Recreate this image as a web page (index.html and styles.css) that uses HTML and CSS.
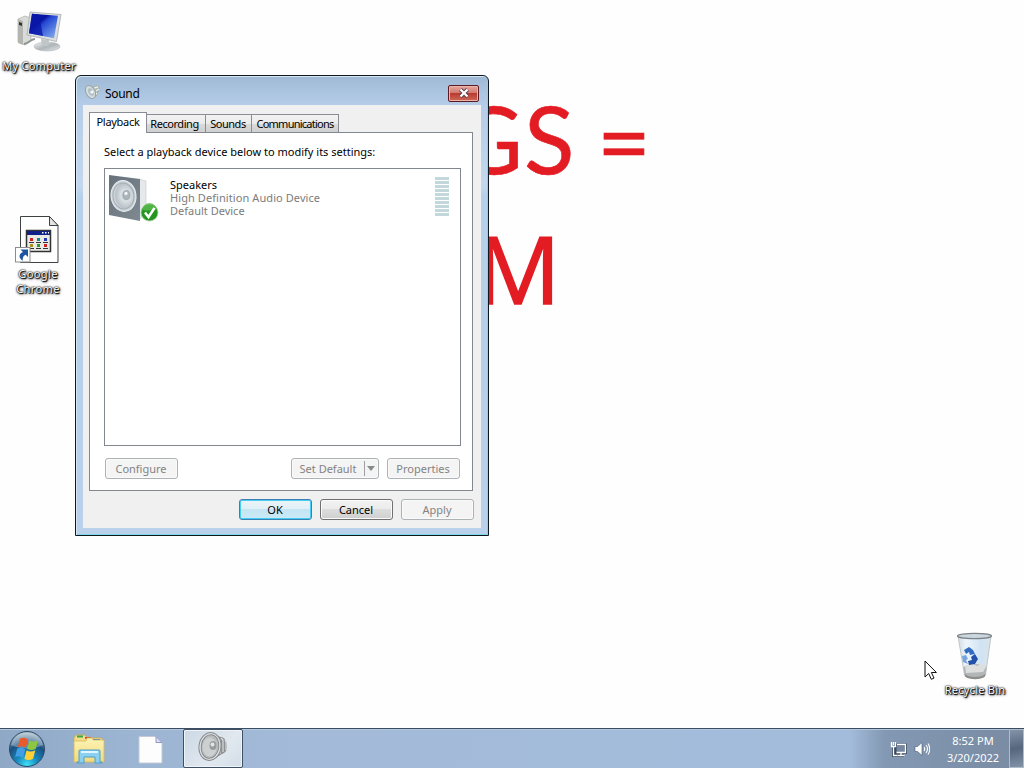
FILE: index.html
```html
<!DOCTYPE html>
<html lang="en">
<head>
    <meta charset="UTF-8">
    <meta name="viewport" content="width=device-width, initial-scale=1.0">
    <title>Sound</title>
    <link rel="stylesheet" href="styles.css">
</head>
<body>
    <!-- Shared gradients and shapes -->
    <svg class="defs" width="0" height="0">
        <defs>
            <linearGradient id="metal" x1="0" y1="0" x2="1" y2="1">
                <stop offset="0" stop-color="#fafafa"/>
                <stop offset="0.5" stop-color="#aeb4b8"/>
                <stop offset="1" stop-color="#e6e9ea"/>
            </linearGradient>
            <linearGradient id="screen" x1="0" y1="0" x2="1" y2="1">
                <stop offset="0" stop-color="#0a1fb0"/>
                <stop offset="0.35" stop-color="#0713a0"/>
                <stop offset="0.45" stop-color="#2448d4"/>
                <stop offset="1" stop-color="#8fb8f0"/>
            </linearGradient>
            <linearGradient id="cabinet" x1="0" y1="0" x2="1" y2="1">
                <stop offset="0" stop-color="#66717b"/>
                <stop offset="1" stop-color="#7f8991"/>
            </linearGradient>
            <radialGradient id="cone" cx="0.6" cy="0.5" r="0.6">
                <stop offset="0" stop-color="#9da7ae"/>
                <stop offset="0.35" stop-color="#dbe1e5"/>
                <stop offset="0.8" stop-color="#b9c2c8"/>
                <stop offset="1" stop-color="#e9edef"/>
            </radialGradient>
            <radialGradient id="orb" cx="0.5" cy="0.95" r="0.9">
                <stop offset="0" stop-color="#3fe0f6"/>
                <stop offset="0.35" stop-color="#1688bd"/>
                <stop offset="0.7" stop-color="#1b5080"/>
                <stop offset="1" stop-color="#9db6c4"/>
            </radialGradient>
            <linearGradient id="folder" x1="0" y1="0" x2="0" y2="1">
                <stop offset="0" stop-color="#fdf4b6"/>
                <stop offset="1" stop-color="#f2da7c"/>
            </linearGradient>
            <linearGradient id="glass" x1="0" y1="0" x2="1" y2="0">
                <stop offset="0" stop-color="#d3dde5"/>
                <stop offset="0.25" stop-color="#eef6fc"/>
                <stop offset="0.7" stop-color="#cfe3f3"/>
                <stop offset="1" stop-color="#dbe4ea"/>
            </linearGradient>
        </defs>
    </svg>

    <div class="desktop">
        <svg class="wallpaper" width="1024" height="728" viewBox="0 0 1024 728">
            <text y="174 174 175" x="455 524 597">GS=</text>
            <text class="wide" y="304" x="476">M</text>
        </svg>

        <div class="shortcut computer">
            <svg width="48" height="42" viewBox="0 0 48 42">
                <path d="M3 8l7-3 6 2v23l-6 4-7-3z" fill="#d9dbd9" stroke="#a9adab" stroke-width=".7"/>
                <path d="M3 8l5 2v24l-5-2z" fill="#b3b5b0"/>
                <path d="M4 11l3 1v3l-3-1z" fill="#34362e"/>
                <path d="M9 33c5-1 7-5 11-5" fill="none" stroke="#8f9594" stroke-width="2"/>
                <ellipse cx="32" cy="35.500" rx="13" ry="4.500" fill="url(#metal)" stroke="#b5b9ba" stroke-width=".6"/>
                <path d="M26 28l8 1-1 6h-6z" fill="#c0c5c7"/>
                <path d="M15 1l31 2.500-4.500 27L12 24z" fill="#dcdfe0" stroke="#a7abae" stroke-width=".8"/>
                <path d="M17 2.800l26 2-4 22.500-25-5z" fill="url(#screen)"/>
                <path d="M17 2.800l7 .6 4 21.500-14-2.700z" fill="#0a17a8" opacity=".8"/>
            </svg>
            <span>My Computer</span>
        </div>

        <div class="shortcut chrome">
            <svg width="46" height="50" viewBox="0 0 46 50">
                <path d="M5.500 1.500h29l8.500 9v37H5.500z" fill="#fefefe" stroke="#3f4242"/>
                <path d="M34.500 1.500v9H43z" fill="#e3e3e3" stroke="#3f4242"/>
                <rect x="11.500" y="15.500" width="24" height="21" fill="#e9e9e6" stroke="#333" stroke-width="1.500"/>
                <rect x="12" y="16" width="23" height="4" fill="#10218a"/>
                <path d="M27 17h1.500v1.500H27zM30 17h1.500v1.500H30zM33 17h1v1.500h-1z" fill="#fff"/>
                <path d="M15 23h3v3h-3zM29 29h3v3h-3z" fill="#d22323"/>
                <path d="M22 23h3v3h-3z" fill="#168b83"/>
                <path d="M29 23h3v3h-3z" fill="#2737b5"/>
                <path d="M15 29h3v3h-3z" fill="#a3921c"/>
                <path d="M22 29h3v3h-3z" fill="#2c9a2a"/>
                <path d="M14 27.500h5M21 27.500h5M28 27.500h5M14 33.500h5M21 33.500h5M28 33.500h5" stroke="#333"/>
                <rect x=".5" y="32.500" width="14.500" height="14.500" fill="#fff" stroke="#8c8c8c"/>
                <path d="M5.500 34.500h7.500v7.500l-2.300-2.300c-2.400 1-3.200 3-2.900 6-4.500-3-4.300-6.500.2-8.600z" fill="#1d56a0"/>
            </svg>
            <span>Google<br>Chrome</span>
        </div>

        <div class="shortcut recycle">
            <svg width="40" height="48" viewBox="0 0 40 48">
                <path d="M3 4h33l-5.500 39c-3 4-18 4-21 0z" fill="url(#glass)" stroke="#b4bbbf" stroke-width=".8"/>
                <path d="M8.500 35c5-4 17-4 23 0l-1 8c-4 4-18 4-21 0z" fill="#b3b6b7"/>
                <path d="M10 34l6-3 6 3 5-3 4 4-3 5-17 1z" fill="#dddfdf"/>
                <path d="M9.500 42c5 4 16 4 21 0l-.5 2.500c-4 3.500-16 3.500-20 0z" fill="#8c8c8b"/>
                <ellipse cx="19.500" cy="4" rx="17" ry="2.600" fill="#cbd7df" stroke="#7d8387" stroke-width="1.300"/>
                <path d="M9 18l5-3 4 3 2 4-5 1-1-3-3 2z" fill="#326cc3"/>
                <path d="M20 22l3 5-3 5-6 1-1-4 4-1-1-3z" fill="#2350a8"/>
                <path d="M7 24l4-1 2 4-2 1 2 4-5-2z" fill="#79a5df"/>
            </svg>
            <span>Recycle Bin</span>
        </div>

        <div class="window">
            <div class="title-bar">
                <svg width="16" height="16" viewBox="0 0 16 16">
                    <path d="M8 3l5-2 3 3-3 8-6 3z" fill="#a9b3ae"/>
                    <path d="M10 4l4-1M10 12l3-3M12 7l3-2" stroke="#e9efe6" stroke-width="1.500"/>
                    <ellipse cx="6.500" cy="8" rx="4.500" ry="7" fill="#d5dddb" stroke="#93a2aa" transform="rotate(-28 6.500 8)"/>
                    <ellipse cx="7" cy="8" rx="2.500" ry="4.300" fill="#b3c1c6" transform="rotate(-28 7 8)"/>
                    <circle cx="8" cy="8" r="1.600" fill="#f8faf9"/>
                </svg>
                <span class="title">Sound</span>
                <button class="close" aria-label="Close">
                    <svg width="12" height="10" viewBox="0 0 12 10">
                        <path d="M2.500 1.500l7 7M9.500 1.500l-7 7" stroke="#5b3a48" stroke-width="4"/>
                        <path d="M2.500 1.500l7 7M9.500 1.500l-7 7" stroke="#fff" stroke-width="2.300"/>
                    </svg>
                </button>
            </div>
            <div class="client">
                <div class="tabs">
                    <div class="tab active">Playback</div>
                    <div class="tab recording">Recording</div>
                    <div class="tab sounds">Sounds</div>
                    <div class="tab communications">Communications</div>
                </div>
                <div class="panel">
                    <div class="hint">Select a playback device below to modify its settings:</div>
                    <div class="device-list">
                        <div class="device">
                            <svg width="54" height="50" viewBox="0 0 54 50">
                                <path d="M31 5l7 2v32l-7 7z" fill="#e5e9eb" stroke="#c4cbd0" stroke-width=".6"/>
                                <path d="M1 1l31 4v42L1 41z" fill="url(#cabinet)"/>
                                <ellipse cx="15.500" cy="22" rx="12.500" ry="15.500" fill="#cdd4d9" stroke="#e7edf0" stroke-width="1" transform="rotate(-6 15 22)"/>
                                <ellipse cx="15.500" cy="22" rx="10.500" ry="13" fill="url(#cone)" stroke="#a3adb4" transform="rotate(-6 15 22)"/>
                                <ellipse cx="18.500" cy="21" rx="3.500" ry="4.500" fill="#aab4bb" stroke="#8f9aa1" stroke-width=".6"/>
                                <circle cx="18" cy="19.500" r="1.700" fill="#eff3f5"/>
                                <circle cx="41.500" cy="38.500" r="8.500" fill="#23961f" stroke="#a9cfa0" stroke-width=".8"/>
                                <path d="M34.500 36a7 7 0 0 1 14 0c-5-1-8 2-14 0z" fill="#63bf57" opacity=".7"/>
                                <path d="M37 38.500l3.500 4.500 6-9" fill="none" stroke="#fff" stroke-width="2.500"/>
                            </svg>
                            <div class="device-text">
                                <div class="name">Speakers</div>
                                <div class="model">High Definition Audio Device</div>
                                <div>Default Device</div>
                            </div>
                            <div class="meter"></div>
                        </div>
                    </div>
                    <div class="panel-buttons">
                        <button class="btn" disabled>Configure</button>
                        <button class="btn split" disabled><span>Set Default</span><i></i></button>
                        <button class="btn" disabled>Properties</button>
                    </div>
                </div>
                <div class="dialog-buttons">
                    <button class="btn default">OK</button>
                    <button class="btn">Cancel</button>
                    <button class="btn" disabled>Apply</button>
                </div>
            </div>
        </div>
    </div>

    <div class="taskbar">
        <svg class="start" width="38" height="38" viewBox="0 0 38 38">
            <circle cx="19" cy="19" r="17.500" fill="url(#orb)" stroke="#2b4a66"/>
            <path d="M3 15a16.500 16.500 0 0 1 32 0c-8 4-22 5-32 0z" fill="#fff" opacity=".3"/>
            <path d="M12 8.500c3-1.300 5.500-1 8 .8l-2.200 8.500c-2.500-1.700-5-2-8-.8z" fill="#ea5a2b"/>
            <path d="M21.300 10.200c2.600 1.600 5.500 1.600 8.700 0l-2.200 8.500c-3 1.600-6 1.600-8.700 0z" fill="#8fc63f"/>
            <path d="M9.300 18.500c3-1.300 5.500-1 8 .8l-2.200 8.500c-2.500-1.700-5-2-8-.8z" fill="#3f9fe4"/>
            <path d="M18.600 20.200c2.600 1.600 5.500 1.600 8.700 0l-2.200 8.500c-3 1.600-6 1.600-8.700 0z" fill="#fdd037"/>
        </svg>
        <svg class="explorer" width="34" height="32" viewBox="0 0 34 32">
            <path d="M2 4l2-3h9l2 3h15v22H2z" fill="#f3dd86" stroke="#c9a94c" stroke-width=".8"/>
            <path d="M5 1.500h6v2H5z" fill="#35a64a"/>
            <path d="M13 3h6v2h-6z" fill="#d9512c"/>
            <path d="M21 5h7v2h-7z" fill="#3a86d0"/>
            <path d="M15 4h5l1 2h11v22H2V7h12z" fill="url(#folder)" stroke="#d7b95b" stroke-width=".8"/>
            <path d="M7 17q0-1 1-1h19q1 0 1 1v11h2v1h-7v-6H12v6H5v-1h2z" fill="#8bd0ef" stroke="#4b9fd0"/>
            <path d="M9 18h17" stroke="#e1f6ff" stroke-width="2"/>
        </svg>
        <svg class="document" width="25" height="28" viewBox="0 0 25 28">
            <path d="M1 .5h17l6 6V27H1z" fill="#fdfdfe" stroke="#c3cad6"/>
            <path d="M18 .5v6h6z" fill="#dcdff2" stroke="#8f95c5"/>
        </svg>
        <div class="task">
            <svg width="32" height="32" viewBox="0 0 32 32">
                <path d="M14 3l10 3c3 0 6 4 6 9s-2 7-5 8l-10 6z" fill="#8d9193"/>
                <path d="M20 6l3 3v14M24 7l2 2v12M28 9l1 2v8" fill="none" stroke="#d9dcdd" stroke-width="1.200"/>
                <ellipse cx="13" cy="15.500" rx="11" ry="14" fill="#e0e3e4" stroke="#85898b" transform="rotate(8 13 15.500)"/>
                <ellipse cx="13" cy="15.500" rx="8.800" ry="11.800" fill="#b9bdbe" stroke="#85898b" transform="rotate(8 13 15.500)"/>
                <ellipse cx="12.500" cy="16" rx="7" ry="9.500" fill="#cdd0d1"/>
                <ellipse cx="16" cy="14.500" rx="3.500" ry="4.500" fill="#979c9e"/>
                <circle cx="15.500" cy="13.500" r="2" fill="#e2e4e5"/>
            </svg>
        </div>
        <div class="tray">
            <svg class="network" width="17" height="17" viewBox="0 0 17 17">
                <path d="M6 4h9.500v7.500H6zM8 14.500h6M11 11.500v3M3.500 6v8.500h4" fill="none" stroke="#38485d" stroke-width="3"/>
                <path d="M6.500 4.500h9v7h-9z" fill="#76889f"/>
                <path d="M7 3.500h8.500v8h-9M7.500 14.500h7M11 12v2M3.500 6v8.500H7M1.500 1v4.500h4V1M3.500 1v3" fill="none" stroke="#fff" stroke-width="1.300"/>
            </svg>
            <svg class="volume" width="16" height="16" viewBox="0 0 16 16">
                <path d="M1 5.500h2.500L8 1.500v13l-4.500-4H1z" fill="#fff" stroke="#4b5b70" stroke-width=".6"/>
                <path d="M10 6q1.500 2 0 4M12 4q3 4 0 8M14 2.500q3.500 5.500 0 11" fill="none" stroke="#fff" stroke-width="1.100"/>
            </svg>
            <div class="clock">
                <div>8:52 PM</div>
                <div>3/20/2022</div>
            </div>
            <div class="show-desktop"></div>
        </div>
    </div>

    <svg class="cursor" width="14" height="21" viewBox="0 0 14 21">
        <path d="M1 1v16l3.700-3.500 2.600 5.800 2.700-1.200-2.600-5.600h5z" fill="#fff" stroke="#111"/>
    </svg>
</body>
</html>
```
FILE: styles.css
```css
body {
    margin: 0;
    width: 1024px;
    height: 768px;
    overflow: hidden;
    display: flex;
    flex-direction: column;
    background-color: #fefefe;
    font-family: "Noto Sans", "Open Sans", sans-serif;
    font-size: 11px;
    color: #000;
}

svg {
    display: block;
    flex: none;
}

.defs {
    position: absolute;
}

.desktop {
    position: relative;
    flex: 1;
}

.wallpaper text {
    font-family: Lato, sans-serif;
    font-size: 93px;
    fill: #e31c24;
    stroke: #e31c24;
    stroke-width: 0.6px;
}

.wallpaper .wide {
    font-family: "Open Sans", sans-serif;
    font-size: 94px;
    stroke-width: 1.5px;
}

/* Desktop icons */
.shortcut {
    position: absolute;
    display: flex;
    flex-direction: column;
    align-items: center;
    width: 80px;
    line-height: 15px;
    text-align: center;
    color: #fff;
    white-space: nowrap;
    letter-spacing: 0.25px;
    text-shadow: 0 0 1px #000, 0 0 2px #000, 1px 1px 1px #000, 1px 1px 3px #000;
}

.computer {
    left: -1px;
    top: 11px;
}

.computer span {
    margin-top: 5px;
}

.chrome {
    left: -2px;
    top: 215px;
}

.chrome span {
    margin-top: 1px;
    letter-spacing: 0.4px;
}

.recycle {
    left: 935px;
    top: 632px;
}

.recycle span {
    margin-top: 2px;
}

/* Sound dialog */
.window {
    position: absolute;
    left: 75px;
    top: 75px;
    box-sizing: border-box;
    width: 414px;
    height: 461px;
    padding: 0 7px 7px;
    border: 1px solid #10181f;
    border-radius: 6px 6px 0 0;
    background: linear-gradient(#9fb9d5 0, #b5cde8 30px, #c3d8ee 110px, #b5d0ea 120px, #b9d1ea 100%);
    box-shadow: inset 1px 1px 0 #d5e6f4, inset -1px -1px 0 #7fd6e8;
}

.title-bar {
    display: flex;
    align-items: center;
    height: 29px;
}

.title-bar > svg {
    margin: 3px 5px 0 1px;
}

.title {
    margin-top: 6px;
    font-size: 12px;
    letter-spacing: -0.3px;
}

.close {
    display: flex;
    align-items: center;
    justify-content: center;
    width: 31px;
    height: 17px;
    margin: 5px 2px 0 auto;
    padding: 0;
    border: 1px solid #5c1a22;
    border-radius: 2px;
    background: linear-gradient(#e5a59c 0, #d27b72 45%, #b93a30 50%, #cf6a58 100%);
    box-shadow: inset 0 0 0 1px #eab5ab;
}

.client {
    box-sizing: border-box;
    height: 423px;
    padding: 7px 7px 0 6px;
    background-color: #f0f0f0;
}

.tabs {
    display: flex;
    align-items: flex-end;
    height: 20px;
}

.tab {
    box-sizing: border-box;
    height: 18px;
    border: 1px solid #898c95;
    border-left: none;
    border-bottom: none;
    background: linear-gradient(#f2f2f2 0, #ebebeb 50%, #dbdbdb 50%, #d0d0d0 100%);
    line-height: 18px;
    text-align: center;
    white-space: nowrap;
}

.tab.active {
    z-index: 1;
    width: 58px;
    height: 21px;
    margin-bottom: -1px;
    border-left: 1px solid #898c95;
    background: #fff;
    letter-spacing: -0.3px;
}

.recording {
    width: 59px;
    padding-right: 3px;
    letter-spacing: -0.45px;
}

.sounds {
    width: 46px;
    padding-right: 1px;
    letter-spacing: -0.5px;
}

.communications {
    width: 87px;
    letter-spacing: -0.75px;
}

.panel {
    box-sizing: border-box;
    width: 384px;
    height: 359px;
    padding: 0 12px 0 14px;
    border: 1px solid #828790;
    background-color: #fff;
}

.hint {
    height: 35px;
    line-height: 38px;
    white-space: nowrap;
}

.device-list {
    box-sizing: border-box;
    width: 357px;
    height: 278px;
    border: 1px solid #828790;
}

.device {
    display: flex;
    padding: 5px 11px 0 3px;
}

.device-text {
    margin: 4px auto 0 8px;
    line-height: 13px;
    color: #7c7c7c;
    white-space: nowrap;
}

.name {
    color: #000;
}

.model {
    letter-spacing: 0.08px;
}

.meter {
    width: 14px;
    height: 39px;
    margin-top: 3px;
    background: repeating-linear-gradient(#c3d8dc 0, #c3d8dc 3px, #fff 3px, #fff 4px);
}

.panel-buttons {
    display: flex;
    gap: 8px;
    margin: 12px 0 0 1px;
}

.btn {
    box-sizing: border-box;
    width: 73px;
    height: 21px;
    padding: 0 1px 0 0;
    border: 1px solid #707070;
    border-radius: 3px;
    background: linear-gradient(#f2f2f2 0, #ebebeb 50%, #dddddd 50%, #cfcfcf 100%);
    box-shadow: inset 0 0 0 1px #fafafa;
    font: inherit;
    color: #000;
}

.btn:disabled {
    border-color: #adb2b5;
    background: #f4f4f4;
    color: #838383;
}

.btn.default {
    border-color: #3c7fb1;
    background: linear-gradient(#eaf4f8 0, #e0f0f7 50%, #c6e5f2 50%, #c9eaf6 100%);
    box-shadow: inset 0 0 0 1px #46cdf3;
}

.split {
    display: flex;
    align-items: center;
    width: 88px;
    margin-left: auto;
}

.split span {
    width: 72px;
    text-align: center;
}

.split i {
    height: 15px;
    border-left: 1px solid #a0a0a0;
}

.split i::after {
    content: "";
    display: block;
    margin: 5px 0 0 2px;
    border: 4px solid transparent;
    border-top: 5px solid #8a8a8a;
    border-bottom: none;
}

.dialog-buttons {
    display: flex;
    justify-content: flex-end;
    gap: 8px;
    margin-top: 8px;
}

/* Taskbar */
.taskbar {
    display: flex;
    align-items: center;
    box-sizing: border-box;
    height: 40px;
    border-top: 1px solid #3a4d63;
    background: linear-gradient(90deg, #8fa8c6 0, #9bb4d1 120px, #a3bbd9 300px, #a3bcdb 850px, #8298b3 885px, #7b8da5 1000px);
    box-shadow: inset 0 1px 0 #b4c8de;
}

.start {
    margin-left: 8px;
}

.explorer {
    margin: 2px 0 0 26px;
}

.document {
    margin: 2px 0 0 32px;
}

.task {
    display: flex;
    align-items: center;
    justify-content: center;
    box-sizing: border-box;
    width: 60px;
    height: 39px;
    margin-left: 20px;
    padding-bottom: 3px;
    border: 1px solid #3f5064;
    border-radius: 2px;
    background: linear-gradient(135deg, #ccd8e5, #e1e8ef 60%, #d3dde8);
    box-shadow: inset 0 0 0 1px #eff4f8;
}

.tray {
    display: flex;
    align-items: center;
    height: 100%;
    margin-left: auto;
}

.network {
    margin-top: 1px;
}

.volume {
    margin-left: 7px;
}

.clock {
    width: 72px;
    margin: 0 0 0 7px;
    line-height: 17px;
    text-align: center;
    color: #fff;
}

.show-desktop {
    box-sizing: border-box;
    width: 15px;
    height: 39px;
    border: 1px solid #b1bccb;
    background: linear-gradient(170deg, #8493a8, #56667c 50%, #8292a7);
}

.cursor {
    position: absolute;
    left: 924px;
    top: 660px;
}
```
